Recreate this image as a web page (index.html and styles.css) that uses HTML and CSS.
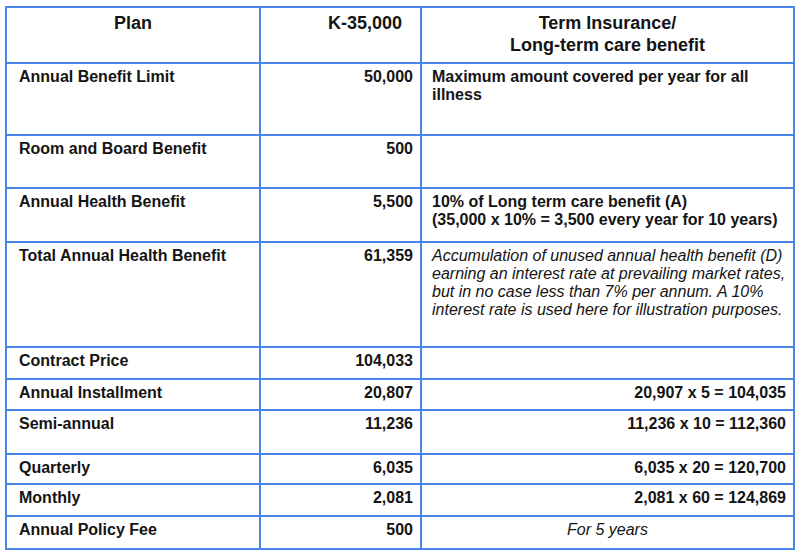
FILE: index.html
```html
<!DOCTYPE html>
<html lang="en">
<head>
<meta charset="utf-8">
<title>Plan K-35,000</title>
<link rel="stylesheet" href="styles.css">
</head>
<body>
<table class="plan">
  <colgroup>
    <col class="c1">
    <col class="c2">
    <col class="c3">
  </colgroup>
  <thead>
    <tr class="r-head">
      <th class="h-plan">Plan</th>
      <th class="h-amt">K-35,000</th>
      <th class="h-desc">Term Insurance/<br>Long-term care benefit</th>
    </tr>
  </thead>
  <tbody>
    <tr class="r-limit">
      <td class="lbl">Annual Benefit Limit</td>
      <td class="num">50,000</td>
      <td class="desc">Maximum amount covered per year for all<br>illness</td>
    </tr>
    <tr class="r-room">
      <td class="lbl">Room and Board Benefit</td>
      <td class="num">500</td>
      <td class="desc"></td>
    </tr>
    <tr class="r-health">
      <td class="lbl">Annual Health Benefit</td>
      <td class="num">5,500</td>
      <td class="desc">10% of Long term care benefit (A)<br>(35,000 x 10% = 3,500 every year for 10 years)</td>
    </tr>
    <tr class="r-total">
      <td class="lbl">Total Annual Health Benefit</td>
      <td class="num">61,359</td>
      <td class="desc note">Accumulation of unused annual health benefit (D)<br>earning an interest rate at prevailing market rates,<br>but in no case less than 7% per annum. A 10%<br>interest rate is used here for illustration purposes.</td>
    </tr>
    <tr class="r-contract">
      <td class="lbl">Contract Price</td>
      <td class="num">104,033</td>
      <td class="desc"></td>
    </tr>
    <tr class="r-annual">
      <td class="lbl">Annual Installment</td>
      <td class="num">20,807</td>
      <td class="calc">20,907 x 5 = 104,035</td>
    </tr>
    <tr class="r-semi">
      <td class="lbl">Semi-annual</td>
      <td class="num">11,236</td>
      <td class="calc">11,236 x 10 = 112,360</td>
    </tr>
    <tr class="r-quarter">
      <td class="lbl">Quarterly</td>
      <td class="num">6,035</td>
      <td class="calc">6,035 x 20 = 120,700</td>
    </tr>
    <tr class="r-month">
      <td class="lbl">Monthly</td>
      <td class="num">2,081</td>
      <td class="calc">2,081 x 60 = 124,869</td>
    </tr>
    <tr class="r-fee">
      <td class="lbl">Annual Policy Fee</td>
      <td class="num">500</td>
      <td class="fee">For 5 years</td>
    </tr>
  </tbody>
</table>
</body>
</html>
```

FILE: styles.css
```css
html, body {
  margin: 0;
  padding: 0;
  background: #ffffff;
}

body {
  padding: 6px 0 0 5px;
  font-family: "Liberation Sans", Arial, sans-serif;
  color: #141414;
}

.plan {
  table-layout: fixed;
  width: 790px;
  border-collapse: separate;
  border-spacing: 2px;
  background: #4a86e8;
}

.c1 { width: 252px; }
.c2 { width: 159px; }
.c3 { width: 371px; }

.plan th,
.plan td {
  background: #ffffff;
  vertical-align: top;
  padding: 0;
  box-sizing: border-box;
  white-space: nowrap;
  overflow: hidden;
}

.plan th {
  font-size: 18px;
  line-height: 22px;
  font-weight: bold;
  padding-top: 4px;
}

.plan th.h-plan { text-align: center; }
.plan th.h-amt { text-align: right; padding-right: 18px; }
.plan th.h-desc { text-align: center; }

.plan td {
  font-size: 16px;
  line-height: 18px;
  font-weight: bold;
  padding-top: 4px;
}

.plan td.lbl {
  text-align: left;
  padding-left: 12px;
}

.plan td.num {
  text-align: right;
  padding-right: 7px;
}

.plan td.desc {
  text-align: left;
  padding-left: 10px;
}

.plan td.note {
  font-weight: normal;
  font-style: italic;
}

.plan td.calc {
  text-align: right;
  padding-right: 7px;
}

.plan td.fee {
  text-align: center;
  font-weight: normal;
  font-style: italic;
}

.r-head { height: 54px; }
.r-limit { height: 70px; }
.r-room { height: 51px; }
.r-health { height: 52px; }
.r-total { height: 103px; }
.r-contract { height: 30px; }
.r-annual { height: 29px; }
.r-semi { height: 42px; }
.r-quarter { height: 28px; }
.r-month { height: 30px; }
.r-fee { height: 31px; }
```
